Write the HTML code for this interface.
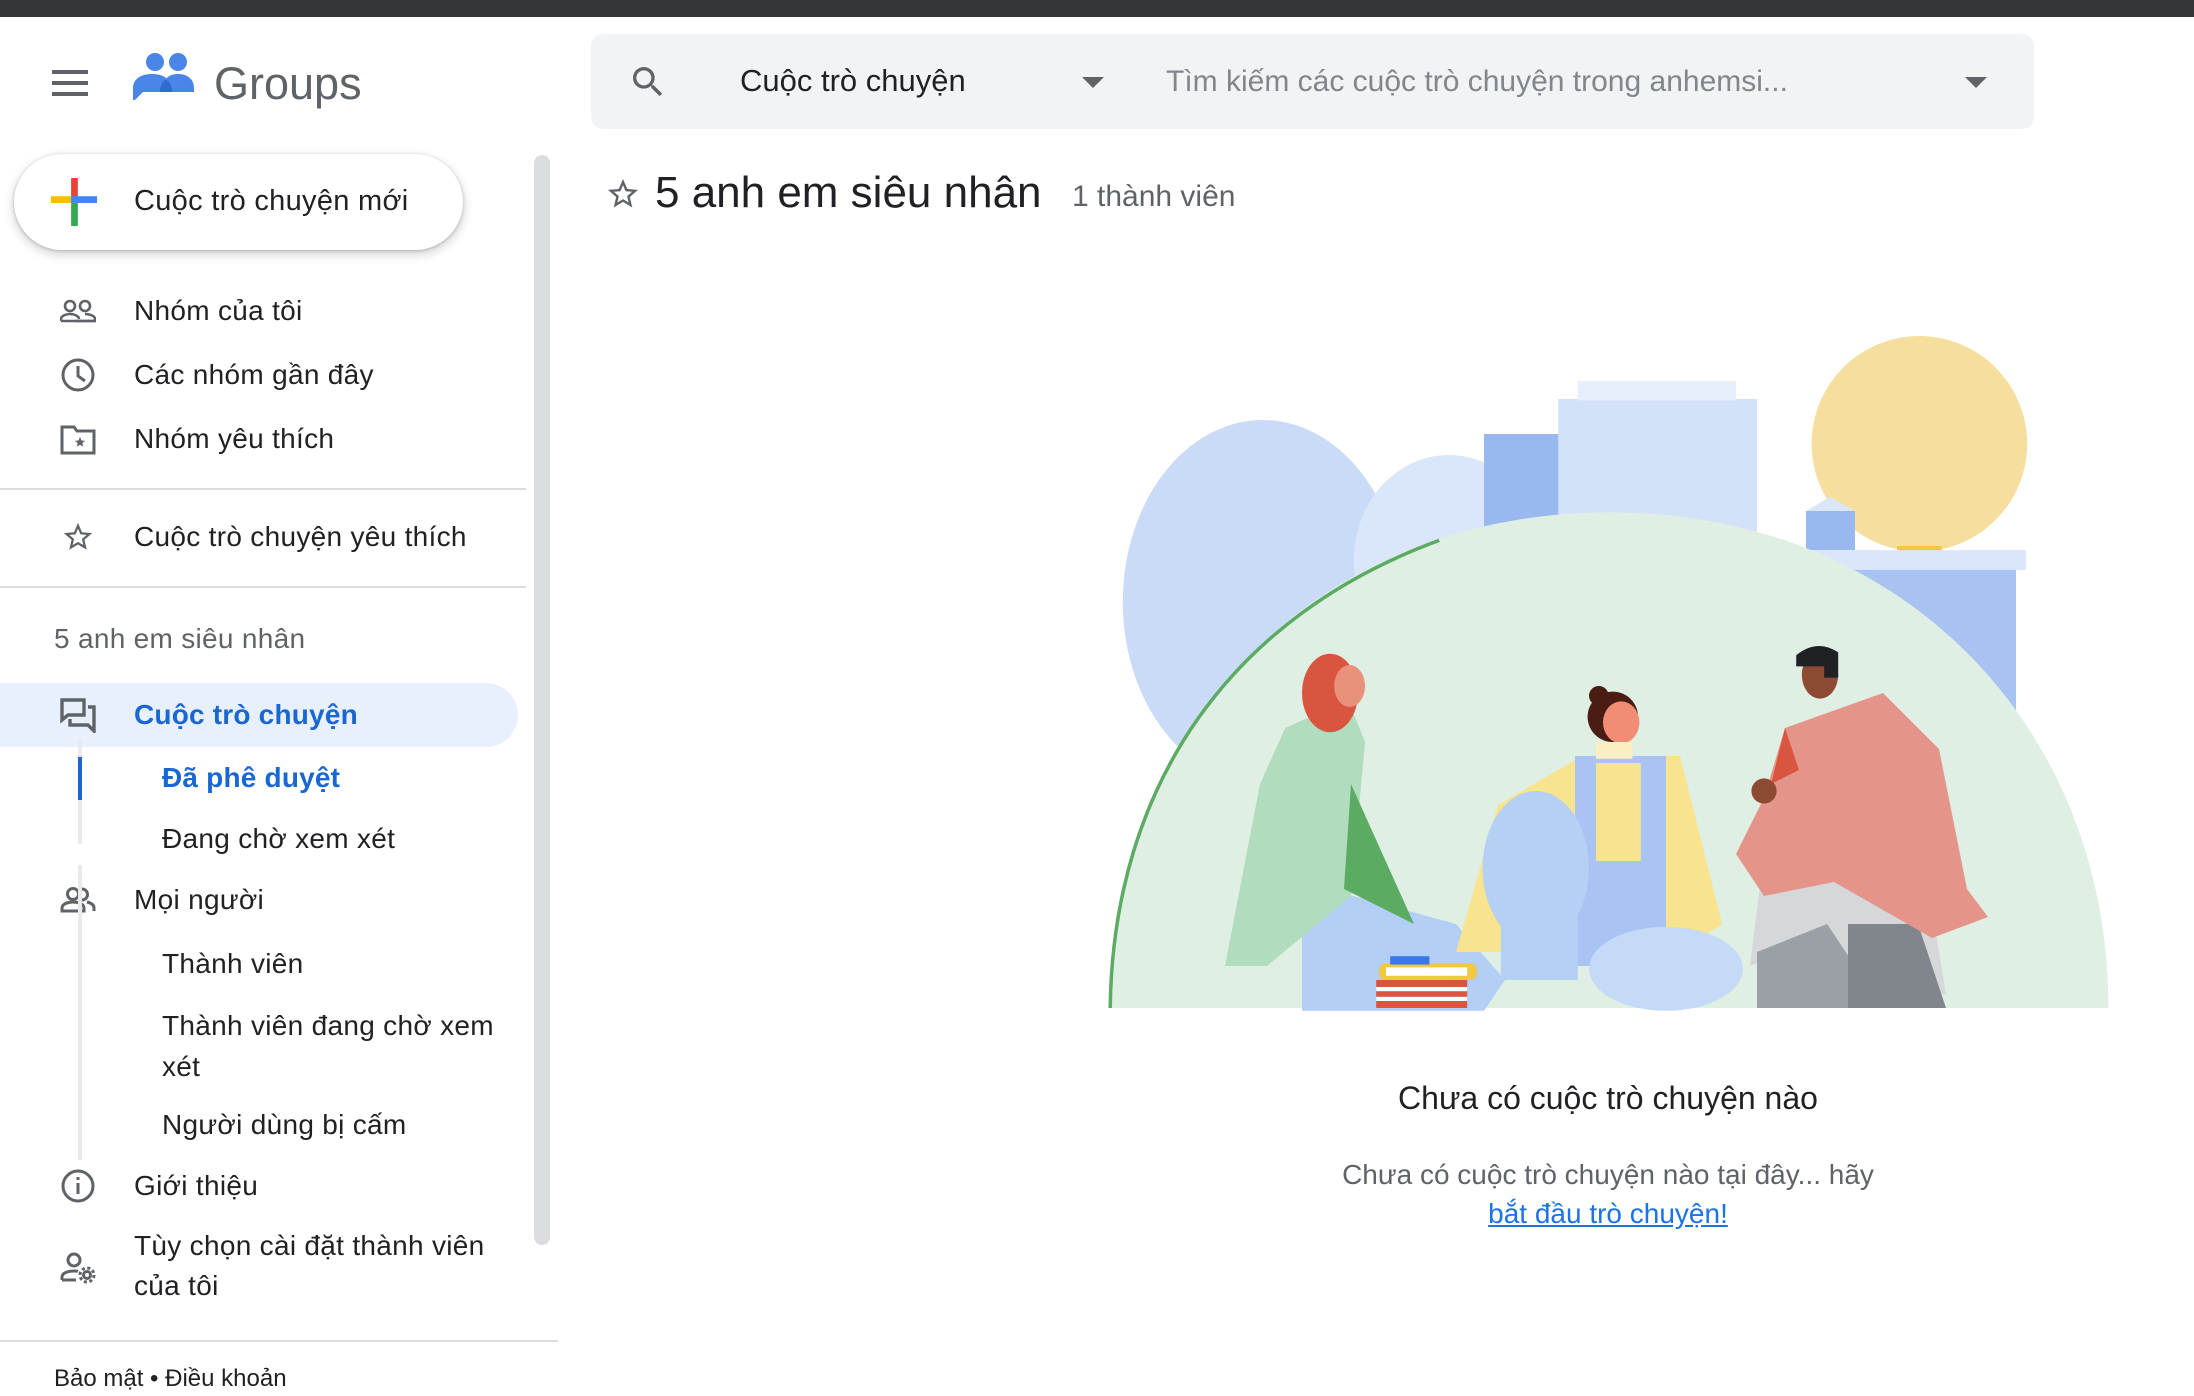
<!DOCTYPE html>
<html><head><meta charset="utf-8"><style>
*{margin:0;padding:0;box-sizing:border-box}
body{width:2194px;height:1384px;overflow:hidden;background:#fff;font-family:"Liberation Sans","Noto Sans CJK SC",sans-serif;color:#202124;position:relative}
.a{position:absolute;white-space:nowrap}
.t{font-size:28px;line-height:40px;letter-spacing:0.3px}
.ic{position:absolute}
</style></head><body>
<div class="a" style="left:0;top:0;width:2194px;height:17px;background:#35363a"></div>
<div class="a" style="left:52px;top:70px;width:36px;height:4px;background:#5f6368"></div>
<div class="a" style="left:52px;top:81px;width:36px;height:4px;background:#5f6368"></div>
<div class="a" style="left:52px;top:92px;width:36px;height:4px;background:#5f6368"></div>
<svg class="ic" style="left:133px;top:52px" width="66" height="62" viewBox="0 0 66 62">
<circle cx="22" cy="10" r="9" fill="#4a86e8"/><circle cx="45" cy="10" r="9" fill="#4a86e8"/>
<path d="M30 36c0-9 6-14 15-14s16 5 16 14v4H30z" fill="#4a86e8"/>
<path d="M0 36c0-9 8-14 19-14s19 5 19 14v4H10L2 48H0z" fill="#4a86e8"/>
<path d="M27 40c0-8 4-12 6-12s6 4 6 12z" fill="#2f6bd0"/>
</svg>
<div class="a" style="left:214px;top:56px;font-size:45px;line-height:56px;color:#5f6368">Groups</div>
<div class="a" style="left:591px;top:34px;width:1443px;height:95px;background:#f1f3f4;border-radius:12px"></div>
<svg class="ic" style="left:628px;top:62px" width="40" height="40" viewBox="0 0 24 24"><path fill="#5f6368" d="M15.5 14h-.79l-.28-.27A6.47 6.47 0 0016 9.5 6.5 6.5 0 109.5 16c1.61 0 3.09-.59 4.23-1.57l.27.28v.79l5 4.99L20.49 19l-4.99-5zm-6 0C7.010 14 5 11.99 5 9.5S7.01 5 9.5 5 14 7.01 14 9.5 11.99 14 9.5 14z"/></svg>
<div class="a" style="left:740px;top:61px;font-size:31px;line-height:40px;color:#202124">Cuộc trò chuyện</div>
<svg class="ic" style="left:1082px;top:77px" width="24" height="12"><path d="M0 0h22L11 11z" fill="#5f6368"/></svg>
<div class="a" style="left:1166px;top:62px;font-size:30px;line-height:40px;color:#80868b">Tìm kiếm các cuộc trò chuyện trong anhemsi...</div>
<svg class="ic" style="left:1965px;top:77px" width="24" height="12"><path d="M0 0h22L11 11z" fill="#5f6368"/></svg>
<div class="a" style="left:14px;top:154px;width:449px;height:96px;border-radius:48px;background:#fff;box-shadow:0 1px 3px rgba(60,64,67,.3),0 4px 8px 3px rgba(60,64,67,.15)"></div>
<svg class="ic" style="left:50px;top:178px" width="48" height="48" viewBox="0 0 48 50"><rect x="21" y="0" width="7" height="22" fill="#ea4335"/><rect x="0" y="19" width="22" height="7" fill="#fbbc04"/><rect x="27" y="19" width="21" height="7" fill="#4285f4"/><rect x="21" y="26" width="7" height="24" fill="#34a853"/><rect x="21" y="19" width="7" height="7" fill="#4285f4"/></svg>
<div class="a t" style="left:134px;top:181px;font-size:29px">Cuộc trò chuyện mới</div>
<svg class="ic" style="left:60px;top:299px" width="36" height="24" viewBox="0 0 36 24" fill="none" stroke="#5f6368" stroke-width="2.6"><circle cx="10" cy="7" r="5"/><circle cx="25" cy="7" r="5"/><path d="M1 22v-2c0-3 5-5 9-5s9 2 9 5M15 22h20v-2c0-3-5-5-10-5"/><path d="M1 22h34"/></svg>
<div class="a t" style="left:134px;top:291px">Nhóm của tôi</div>
<svg class="ic" style="left:60px;top:357px" width="36" height="36" viewBox="0 0 36 36" fill="none" stroke="#5f6368" stroke-width="3"><circle cx="18" cy="18" r="15"/><path d="M18 9v10l7 5"/></svg>
<div class="a t" style="left:134px;top:355px">Các nhóm gần đây</div>
<svg class="ic" style="left:60px;top:425px" width="36" height="30" viewBox="0 0 36 30" fill="none" stroke="#5f6368" stroke-width="3"><path d="M2 2h12l3 4h17v22H2z"/><path d="M20 12l1.5 3.5 3.5.3-2.7 2.3.9 3.6-3.2-2-3.2 2 .9-3.6-2.7-2.3 3.5-.3z" fill="#5f6368" stroke="none"/></svg>
<div class="a t" style="left:134px;top:419px">Nhóm yêu thích</div>
<div class="a" style="left:0;top:488px;width:526px;height:2px;background:#dadce0"></div>
<svg class="ic" style="left:60px;top:520px" width="36" height="34" viewBox="0 0 24 24"><path fill="#5f6368" d="M22 9.24l-7.19-.62L12 2 9.19 8.63 2 9.24l5.46 4.73L5.82 21 12 17.27 18.18 21l-1.63-7.03L22 9.24zM12 15.4l-3.76 2.27 1-4.280-3.32-2.88 4.38-.38L12 6.1l1.71 4.04 4.38.38-3.32 2.88 1 4.28L12 15.4z"/></svg>
<div class="a t" style="left:134px;top:517px">Cuộc trò chuyện yêu thích</div>
<div class="a" style="left:0;top:586px;width:526px;height:2px;background:#dadce0"></div>
<div class="a t" style="left:54px;top:619px;color:#5f6368">5 anh em siêu nhân</div>
<div class="a" style="left:0;top:683px;width:518px;height:64px;background:#e8f0fe;border-radius:0 32px 32px 0"></div>
<svg class="ic" style="left:60px;top:697px" width="36" height="36" viewBox="0 0 36 36" fill="none" stroke="#5f6368" stroke-width="3.4"><path d="M2 3h22v15H8l-6 5z"/><path d="M28 10h6v24l-6-6H10v-6"/></svg>
<div class="a t" style="left:134px;top:695px;color:#1967d2;font-weight:bold;letter-spacing:0.2px">Cuộc trò chuyện</div>
<div class="a" style="left:78px;top:741px;width:4px;height:103px;background:#e8eaed"></div>
<div class="a" style="left:78px;top:757px;width:4px;height:43px;background:#1967d2"></div>
<div class="a t" style="left:162px;top:758px;color:#1967d2;font-weight:bold;letter-spacing:0.2px">Đã phê duyệt</div>
<div class="a t" style="left:162px;top:819px">Đang chờ xem xét</div>
<svg class="ic" style="left:60px;top:887px" width="36" height="26" viewBox="0 0 36 26" fill="none" stroke="#5f6368" stroke-width="3"><circle cx="13" cy="7" r="5.5"/><path d="M2 24v-3c0-4 6-6 11-6s11 2 11 6v3z"/><path d="M22 2a5.5 5.5 0 010 11M27 15c4 1 7 3 7 6v3"/></svg>
<div class="a t" style="left:134px;top:880px">Mọi người</div>
<div class="a" style="left:78px;top:865px;width:4px;height:295px;background:#e8eaed"></div>
<div class="a t" style="left:162px;top:944px">Thành viên</div>
<div class="a t" style="left:162px;top:1006px">Thành viên đang chờ xem</div>
<div class="a t" style="left:162px;top:1047px">xét</div>
<div class="a t" style="left:162px;top:1105px">Người dùng bị cấm</div>
<svg class="ic" style="left:60px;top:1168px" width="36" height="36" viewBox="0 0 36 36" fill="none" stroke="#5f6368" stroke-width="3"><circle cx="18" cy="18" r="15"/><path d="M18 15v11M18 9v3"/></svg>
<div class="a t" style="left:134px;top:1166px">Giới thiệu</div>
<svg class="ic" style="left:60px;top:1252px" width="36" height="32" viewBox="0 0 36 32" fill="none" stroke="#5f6368" stroke-width="3"><circle cx="14" cy="8" r="6"/><path d="M2 28v-3c0-4 6-6 12-6 2 0 3 0 4 .5M2 28h14"/><circle cx="27" cy="23" r="5" fill="#5f6368" stroke="none"/><circle cx="27" cy="23" r="7" stroke-dasharray="3 2.5" stroke-width="3"/><circle cx="27" cy="23" r="2" fill="#fff" stroke="none"/></svg>
<div class="a t" style="left:134px;top:1226px">Tùy chọn cài đặt thành viên</div>
<div class="a t" style="left:134px;top:1266px">của tôi</div>
<div class="a" style="left:0;top:1340px;width:558px;height:2px;background:#dadce0"></div>
<div class="a" style="left:54px;top:1362px;font-size:24px;line-height:34px">Bảo mật • Điều khoản</div>
<div class="a" style="left:534px;top:155px;width:16px;height:1090px;background:#dadce0;border-radius:8px"></div>
<svg class="ic" style="left:604px;top:176px" width="38" height="36" viewBox="0 0 24 24"><path fill="#5f6368" d="M22 9.24l-7.19-.62L12 2 9.19 8.63 2 9.24l5.46 4.73L5.82 21 12 17.27 18.18 21l-1.63-7.03L22 9.24zM12 15.4l-3.76 2.27 1-4.28-3.32-2.88 4.38-.38L12 6.1l1.71 4.04 4.38.38-3.32 2.88 1 4.28L12 15.4z"/></svg>
<div class="a" style="left:655px;top:166px;font-size:44px;line-height:54px">5 anh em siêu nhân</div>
<div class="a" style="left:1072px;top:177px;font-size:30px;line-height:40px;color:#5f6368">1 thành viên</div>
<svg class="ic" style="left:1092px;top:322px" width="1036" height="700" viewBox="780 230 740 500">
<ellipse cx="902" cy="430" rx="100" ry="130" fill="#c9dbf7"/>
<ellipse cx="1035" cy="400" rx="68" ry="75" fill="#dae6fa"/>
<rect x="1060" y="310" width="55" height="140" fill="#9ab8f0"/>
<rect x="1113" y="285" width="142" height="200" fill="#d4e2f9"/>
<rect x="1127" y="272" width="113" height="14" fill="#e8effc"/>
<circle cx="1371" cy="317" r="77" fill="#f6df9e"/>
<rect x="1355" y="390" width="32" height="4" fill="#f2c744"/>
<rect x="1290" y="365" width="35" height="28" fill="#9ab8f0"/>
<path d="M1290 365l17-10 18 10z" fill="#dae6fa"/>
<rect x="1290" y="393" width="157" height="14" fill="#dbe6fa"/>
<rect x="1320" y="407" width="120" height="160" fill="#a8c3f2"/>
<path d="M793 720C793 520 940 366 1150 366S1506 520 1506 720z" fill="#e0efe3"/>
<path d="M793 720C795 560 880 440 1028 386" fill="none" stroke="#5bab62" stroke-width="2.5"/>
<path d="M930 630l110 30 35 40-15 22H930z" fill="#b3cff5"/>
<path d="M918 520l45-20 12 30-10 110-60 50h-30l25-130z" fill="#b1dcbd"/>
<path d="M965 560l-5 75 50 25z" fill="#5bab62"/>
<ellipse cx="950" cy="495" rx="20" ry="28" fill="#d9553f"/>
<ellipse cx="964" cy="490" rx="11" ry="15" fill="#e8927c"/>
<rect x="985" y="688" width="70" height="12" rx="5" fill="#f2c744"/>
<rect x="990" y="691" width="58" height="6" fill="#fff"/>
<rect x="983" y="700" width="65" height="20" fill="#d9553f"/>
<rect x="983" y="705" width="65" height="3" fill="#fff"/><rect x="983" y="712" width="65" height="3" fill="#fff"/>
<rect x="993" y="683" width="28" height="6" fill="#3b78e7"/>
<path d="M1070 575l60-35h70l30 120-30 20h-160z" fill="#f8e38f"/>
<rect x="1125" y="540" width="65" height="150" fill="#a9c4f2"/>
<rect x="1140" y="545" width="32" height="70" fill="#f8e38f"/>
<ellipse cx="1097" cy="620" rx="38" ry="55" fill="#b4d0f5"/>
<rect x="1072" y="640" width="55" height="60" fill="#b4d0f5"/>
<ellipse cx="1190" cy="692" rx="55" ry="30" fill="#c5daf7"/>
<circle cx="1152" cy="512" r="18" fill="#4a1d12"/>
<circle cx="1142" cy="497" r="7" fill="#4a1d12"/>
<ellipse cx="1158" cy="516" rx="13" ry="15" fill="#f08d74"/>
<rect x="1140" y="530" width="26" height="12" fill="#fbeec0"/>
<path d="M1260 610l80-10 40 50 10 60h-60l-30-40-50 20z" fill="#d6d7d9"/>
<path d="M1255 680l50-20 40 60h-90z" fill="#9aa0a6"/>
<path d="M1320 660l50 0 20 60h-70z" fill="#80868b"/>
<path d="M1275 520l70-25 40 40 20 100 15 20-40 15-70-40-50 10-20-30 20-40z" fill="#e5948a"/>
<path d="M1275 520l-10 40 20-10z" fill="#d9553f"/>
<ellipse cx="1300" cy="482" rx="13" ry="17" fill="#8e4b34"/>
<path d="M1283 468q15-12 30-2v18h-10v-8h-20z" fill="#202124"/>
<circle cx="1260" cy="565" r="9" fill="#8e4b34"/>
</svg>
<div class="a" style="left:1208px;top:1077px;width:800px;text-align:center;font-size:32px;line-height:42px">Chưa có cuộc trò chuyện nào</div>
<div class="a" style="left:1208px;top:1156px;width:800px;text-align:center;font-size:28px;line-height:38px;color:#5f6368">Chưa có cuộc trò chuyện nào tại đây... hãy</div>
<div class="a" style="left:1208px;top:1195px;width:800px;text-align:center;font-size:28px;line-height:38px;color:#1a73e8;text-decoration:underline">bắt đầu trò chuyện!</div>
</body></html>
